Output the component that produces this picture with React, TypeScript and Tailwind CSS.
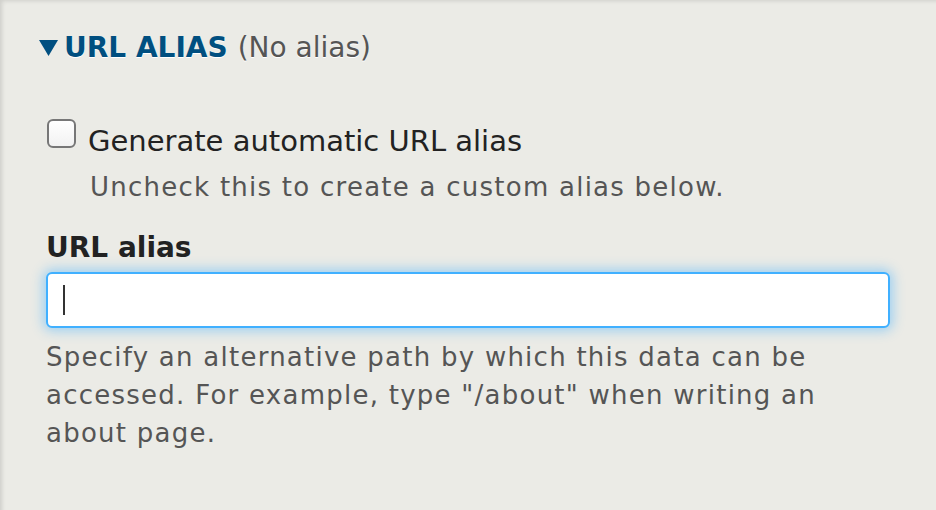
export default function App() {
  return (
    <div
      className="min-h-[510px] w-[936px] bg-[#ebebe6] shadow-[inset_4px_3px_4px_-2px_rgba(0,0,0,0.12)] px-[46px] pt-[28px] text-[#333]"
      style={{ fontFamily: '"DejaVu Sans", "Lucida Grande", sans-serif' }}
    >
      <div className="flex h-[40px] items-center">
        <svg width="19" height="16" viewBox="0 0 19 16" className="ml-[-7px] mr-[6px]">
          <path d="M0 0H19L9.5 16Z" fill="#004f80" />
        </svg>
        <span className="text-[28px] font-bold text-[#004f80] [text-shadow:0_1px_0_#fff]">URL ALIAS</span>
        <span className="ml-[10px] text-[28px] text-[#555] [text-shadow:0_1px_0_#fff]">(No alias)</span>
      </div>

      <div className="mt-[46px] flex items-start">
        <span className="ml-[1px] mt-[5px] h-[29px] w-[29px] rounded-[6px] border-2 border-[#777] bg-gradient-to-b from-white to-[#f2f2f2]" />
        <span className="ml-[12px] text-[29px] leading-[54px] text-[#222]">Generate automatic URL alias</span>
      </div>
      <p className="ml-[44px] mt-[1px] text-[26px] leading-[36px] tracking-[1.25px] text-[#555]">
        Uncheck this to create a custom alias below.
      </p>

      <p className="mt-[23px] text-[28px] font-bold leading-[40px] text-[#222]">URL alias</p>
      <div className="mt-[4px] flex h-[56px] w-[844px] items-center rounded-[6px] border-2 border-[#40b0ff] bg-white px-[15px] shadow-[0_0_12px_3px_rgba(64,176,255,0.45)]">
        <span className="h-[30px] w-[2px] bg-[#333]" />
      </div>
      <p className="mt-[10px] w-[790px] text-[26px] leading-[38px] tracking-[1.25px] text-[#555]">
        Specify an alternative path by which this data can be accessed. For example, type "/about" when writing an about page.
      </p>
    </div>
  );
}
